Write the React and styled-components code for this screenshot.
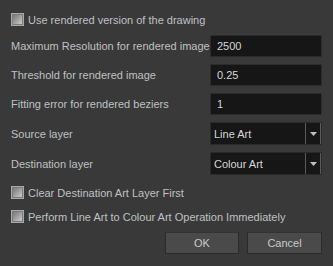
import React from "react";
import styled, { createGlobalStyle } from "styled-components";

const Global = createGlobalStyle`
  html, body { margin: 0; padding: 0; background: #393939; }
  body { width: 333px; height: 266px; overflow: hidden; font-family: "Liberation Sans", Arial, sans-serif; }
`;

const Dialog = styled.div`
  box-sizing: border-box;
  width: 333px;
  height: 266px;
  background: #393939;
  padding: 13px 11px 0 11px;
  display: flex;
  flex-direction: column;
  color: #bfc1c3;
  font-size: 11px;
`;

const CheckRow = styled.label`
  display: flex;
  align-items: center;
  gap: 4px;
  height: 13px;
  margin-top: ${(p) => p.$mt || 0}px;
  white-space: nowrap;
`;

const Box = styled.span`
  box-sizing: border-box;
  width: 13px;
  height: 13px;
  flex: none;
  border: 1px solid #a9a9a9;
  background: linear-gradient(135deg, #6f6f6f 0%, #9a9a9a 45%, #d6d6d6 100%);
  box-shadow: inset 0 0 0 1px #7c7c7c;
`;

const Fields = styled.div`
  display: flex;
  flex-direction: column;
  gap: 7px;
  margin-top: 9px;
`;

const FieldRow = styled.div`
  display: flex;
  align-items: center;
  justify-content: space-between;
  height: ${(p) => p.$h || 22}px;
  white-space: nowrap;
`;

const Label = styled.span``;

const TextField = styled.div`
  box-sizing: border-box;
  width: 112px;
  height: 22px;
  background: #161616;
  border: 1px solid #2c2c2c;
  padding: 0 6px;
  display: flex;
  align-items: center;
  color: #d4d6d8;
`;

const Combo = styled.div`
  box-sizing: border-box;
  width: 112px;
  height: 23px;
  background: #161616;
  border: 1px solid #2a2a2a;
  display: flex;
  align-items: stretch;
  color: #d4d6d8;
`;

const ComboText = styled.span`
  flex: 1;
  display: flex;
  align-items: center;
  padding-left: 3px;
`;

const ComboButton = styled.span`
  box-sizing: border-box;
  width: 16px;
  border-left: 1px solid #5a5a5a;
  border-right: 1px solid #5a5a5a;
  display: flex;
  align-items: center;
  justify-content: center;
`;

const ButtonRow = styled.div`
  display: flex;
  justify-content: flex-end;
  gap: 8px;
  margin-top: 9px;
`;

const Button = styled.button`
  box-sizing: border-box;
  width: ${(p) => p.$w}px;
  height: 22px;
  background: #4a4a4a;
  border: 1px solid #2a2a2a;
  border-top-color: #333;
  color: #c8cacc;
  font: inherit;
  padding: 0;
`;

const Arrow = () => (
  <svg width="7" height="4" viewBox="0 0 7 4">
    <path d="M0 0 H7 L3.5 4 Z" fill="#c0c0c0" />
  </svg>
);

export default function App() {
  return (
    <Dialog>
      <Global />
      <CheckRow>
        <Box />
        Use rendered version of the drawing
      </CheckRow>
      <Fields>
        <FieldRow>
          <Label>Maximum Resolution for rendered image</Label>
          <TextField>2500</TextField>
        </FieldRow>
        <FieldRow>
          <Label>Threshold for rendered image</Label>
          <TextField>0.25</TextField>
        </FieldRow>
        <FieldRow>
          <Label>Fitting error for rendered beziers</Label>
          <TextField>1</TextField>
        </FieldRow>
        <FieldRow $h={23}>
          <Label>Source layer</Label>
          <Combo>
            <ComboText>Line Art</ComboText>
            <ComboButton><Arrow /></ComboButton>
          </Combo>
        </FieldRow>
        <FieldRow $h={23}>
          <Label>Destination layer</Label>
          <Combo>
            <ComboText>Colour Art</ComboText>
            <ComboButton><Arrow /></ComboButton>
          </Combo>
        </FieldRow>
      </Fields>
      <CheckRow $mt={11}>
        <Box />
        Clear Destination Art Layer First
      </CheckRow>
      <CheckRow $mt={11}>
        <Box />
        Perform Line Art to Colour Art Operation Immediately
      </CheckRow>
      <ButtonRow>
        <Button $w={74}>OK</Button>
        <Button $w={75}>Cancel</Button>
      </ButtonRow>
    </Dialog>
  );
}
